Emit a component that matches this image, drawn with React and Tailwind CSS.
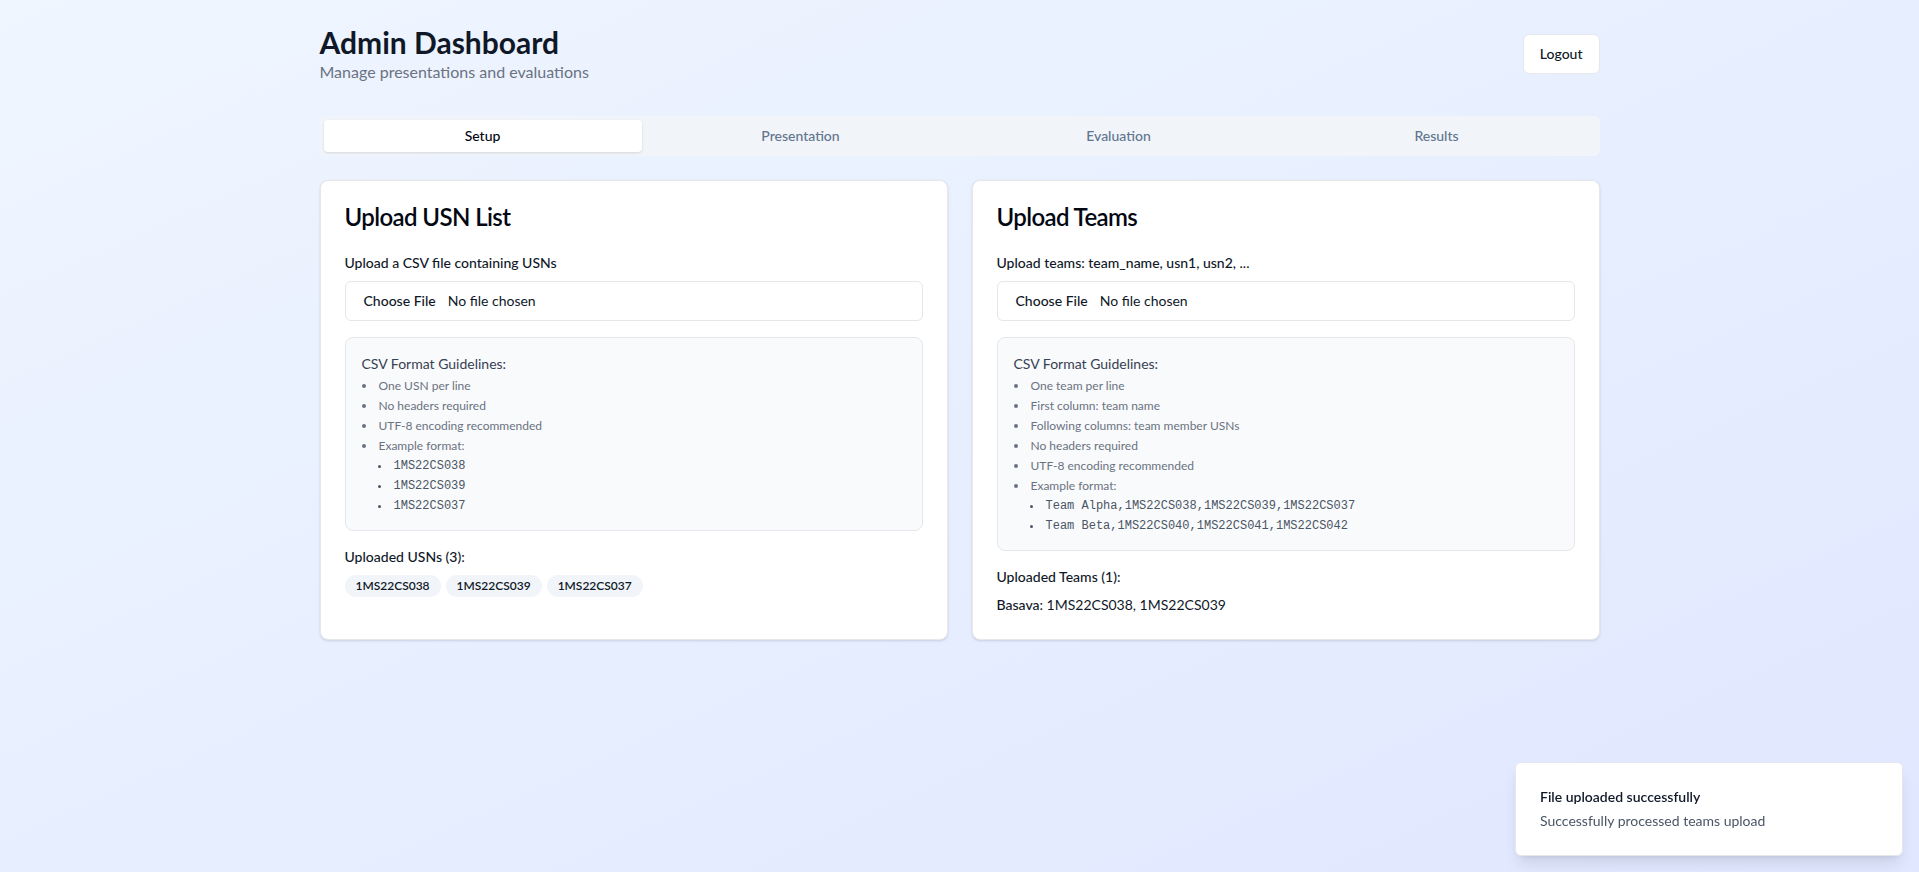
import React from 'react';

const usns = ['1MS22CS038', '1MS22CS039', '1MS22CS037'];

const tabs = ['Setup', 'Presentation', 'Evaluation', 'Results'];

const Guidelines = ({ items, examples }) => (
  <div className="mt-4 rounded-lg border border-gray-200 bg-gray-50 p-4">
    <h4 className="text-sm text-gray-700">CSV Format Guidelines:</h4>
    <ul className="mt-1 list-inside list-disc space-y-1 text-xs leading-4 text-gray-500">
      {items.map((item) => (
        <li key={item}>{item}</li>
      ))}
      <li>
        Example format:
        <ul className="mt-1 ml-4 list-inside list-disc space-y-1 text-xs leading-4 text-gray-600" style={{ fontFamily: '"Liberation Mono", monospace' }}>
          {examples.map((ex) => (
            <li key={ex}>{ex}</li>
          ))}
        </ul>
      </li>
    </ul>
  </div>
);

const FileInput = () => (
  <div className="flex h-10 w-full items-center rounded-md border border-gray-200 bg-white px-3 text-sm">
    <span className="ml-1.5 font-medium text-gray-900">Choose File</span>
    <span className="ml-3 text-gray-900">No file chosen</span>
  </div>
);

const Card = ({ title, children }) => (
  <div className="rounded-lg border border-gray-200 bg-white shadow-sm">
    <div className="p-6">
      <h3 className="text-2xl leading-6 font-semibold tracking-tight text-gray-950">{title}</h3>
    </div>
    <div className="p-6 pt-0">{children}</div>
  </div>
);

export default function App() {
  return (
    <div
      className="min-h-screen bg-gradient-to-br from-blue-50 to-indigo-100"
      style={{ fontFamily: 'Lato, "Noto Sans", sans-serif' }}
    >
      <div className="mx-auto max-w-7xl pt-6">
        {/* header */}
        <div className="mb-8 flex items-center justify-between">
          <div>
            <h1 className="text-3xl font-bold text-gray-900">Admin Dashboard</h1>
            <p className="text-base text-gray-500">Manage presentations and evaluations</p>
          </div>
          <button className="h-10 rounded-md border border-gray-200 bg-white px-4 text-sm font-medium text-gray-900">
            Logout
          </button>
        </div>

        {/* tabs */}
        <div className="grid h-10 grid-cols-4 rounded-md bg-slate-100 p-1">
          {tabs.map((t, i) => (
            <div
              key={t}
              className={
                i === 0
                  ? 'flex items-center justify-center rounded-sm bg-white text-sm font-medium text-gray-950 shadow-sm'
                  : 'flex items-center justify-center text-sm font-medium text-slate-500'
              }
            >
              {t}
            </div>
          ))}
        </div>

        <div className="mt-6 grid grid-cols-2 gap-6">
          <Card title="Upload USN List">
            <p className="mb-2 text-sm font-medium text-gray-900">Upload a CSV file containing USNs</p>
            <FileInput />
            <Guidelines
              items={['One USN per line', 'No headers required', 'UTF-8 encoding recommended']}
              examples={usns}
            />
            <p className="mt-4 mb-2 text-sm font-medium text-gray-900">Uploaded USNs (3):</p>
            <div className="flex flex-wrap gap-[5px]">
              {usns.map((u) => (
                <span
                  key={u}
                  className="rounded-full border border-transparent bg-slate-100 px-2.5 py-0.5 text-xs font-semibold text-gray-900"
                >
                  {u}
                </span>
              ))}
            </div>
          </Card>

          <Card title="Upload Teams">
            <p className="mb-2 text-sm font-medium text-gray-900">Upload teams: team_name, usn1, usn2, ...</p>
            <FileInput />
            <Guidelines
              items={[
                'One team per line',
                'First column: team name',
                'Following columns: team member USNs',
                'No headers required',
                'UTF-8 encoding recommended',
              ]}
              examples={[
                'Team Alpha,1MS22CS038,1MS22CS039,1MS22CS037',
                'Team Beta,1MS22CS040,1MS22CS041,1MS22CS042',
              ]}
            />
            <p className="mt-4 mb-2 text-sm font-medium text-gray-900">Uploaded Teams (1):</p>
            <p className="text-sm text-gray-900">
              <span className="font-medium">Basava</span>: 1MS22CS038, 1MS22CS039
            </p>
          </Card>
        </div>
      </div>

      {/* toast */}
      <div className="fixed right-0 bottom-0 w-[420px] p-4">
        <div className="grid gap-1 rounded-md border border-gray-200 bg-white p-6 pr-8 shadow-lg">
          <div className="text-sm font-semibold text-gray-900">File uploaded successfully</div>
          <div className="text-sm text-gray-600">Successfully processed teams upload</div>
        </div>
      </div>
    </div>
  );
}
